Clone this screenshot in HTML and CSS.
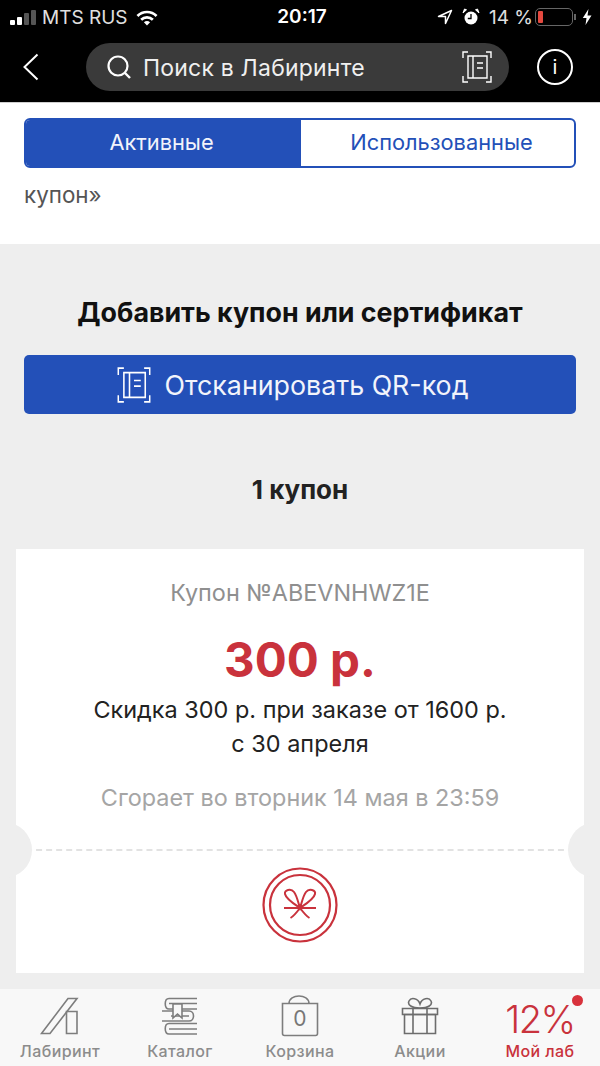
FILE: index.html
```html
<!DOCTYPE html>
<html lang="ru">
<head>
    <meta charset="UTF-8">
    <meta name="viewport" content="width=device-width, initial-scale=1.0">
    <title>Купоны</title>
    <link rel="stylesheet" href="styles.css">
</head>
<body>
    <div class="screen">
        <div class="status-bar">
            <div class="status-left">
                <div class="signal"><i class="on"></i><i class="on"></i><i></i><i></i></div>
                <span>MTS RUS</span>
                <svg class="wifi" width="24" height="17" viewBox="0 0 24 17"><path d="M1.5 6A15 15 0 0 1 22.5 6L20.6 8A12 12 0 0 0 3.4 8Z" fill="#fff"/><path d="M5.2 9.7A10 10 0 0 1 18.800 9.700L16.900 11.700A7.200 7.200 0 0 0 7.100 11.700Z" fill="#fff"/><path d="M8.900 13.300A4.700 4.700 0 0 1 15.100 13.300L12 16.500Z" fill="#fff"/></svg>
            </div>
            <div class="status-time">20:17</div>
            <div class="status-right">
                <svg width="16" height="16" viewBox="0 0 16 16"><path d="M14.500 1.500 1.500 7.500H8.500V14.500Z" fill="none" stroke="#fff" stroke-width="1.500" stroke-linejoin="round"/></svg>
                <svg class="alarm" width="18" height="18" viewBox="0 0 18 18"><circle cx="9" cy="10" r="6.500" fill="#fff"/><path d="M9 6V10.500H5.800" fill="none" stroke="#000" stroke-width="1.300"/><path d="M1 5 4.500 1.800 2.500 1ZM17 5 13.500 1.800 15.500 1Z" fill="#fff" stroke="#fff"/></svg>
                <span>14 %</span>
                <div class="battery"><div class="battery-level"></div></div>
                <div class="battery-tip"></div>
                <svg width="10" height="16" viewBox="0 0 10 16"><path d="M6.500 0 0.800 9H4.500L3.500 16 9.500 6.500H5.500Z" fill="#fff"/></svg>
            </div>
        </div>

        <div class="nav-bar">
            <svg class="back" width="18" height="28" viewBox="0 0 18 28"><path d="M15.500 1.500 2.500 14 15.500 26.500" fill="none" stroke="#fff" stroke-width="2"/></svg>
            <div class="search">
                <svg width="26" height="26" viewBox="0 0 26 26"><circle cx="12" cy="12" r="9.500" fill="none" stroke="#fff" stroke-width="2.200"/><path d="M18.500 18.500 24 24" stroke="#fff" stroke-width="2.400"/></svg>
                <span class="search-text">Поиск в Лабиринте</span>
                <svg class="scan" width="30" height="32" viewBox="0 0 30 32"><use href="#scan-icon"/></svg>
            </div>
            <div class="info"><span>i</span></div>
        </div>

        <div class="top-panel">
            <div class="tabs">
                <div class="tab active">Активные</div>
                <div class="tab">Использованные</div>
            </div>
            <div class="note">купон»</div>
        </div>

        <div class="content">
            <h2 class="add-title">Добавить купон или сертификат</h2>
            <div class="scan-btn">
                <svg width="34" height="36" viewBox="0 0 30 32"><use href="#scan-icon"/></svg>
                <span>Отсканировать QR-код</span>
            </div>
            <h3 class="count">1 купон</h3>

            <div class="coupon">
                <div class="coupon-top">
                    <div class="coupon-num">Купон №ABEVNHWZ1E</div>
                    <div class="coupon-sum">300 р.</div>
                    <div class="coupon-desc">Скидка 300 р. при заказе от 1600 р.<br>с 30 апреля</div>
                    <div class="coupon-exp">Сгорает во вторник 14 мая в 23:59</div>
                </div>
                <div class="coupon-bottom">
                    <svg width="76" height="76" viewBox="0 0 76 76" fill="none" stroke="#c9323c">
                        <circle cx="38" cy="38" r="36.500" stroke-width="2.200"/>
                        <circle cx="38" cy="38" r="30" stroke-width="2.200"/>
                        <path d="M22 41H54" stroke-width="2"/>
                        <path d="M38 41C32 37 24 32 23 27C22 23 29 21 32 25C35 29 36 35 38 41C40 35 41 29 44 25C47 21 54 23 53 27C52 32 44 37 38 41Z" stroke-width="2"/>
                        <path d="M38 41C35 45 32 49 28.500 51M38 41C41 45 44 49 47.500 51" stroke-width="2"/>
                    </svg>
                </div>
                <div class="notch notch-left"></div>
                <div class="notch notch-right"></div>
            </div>
        </div>

        <div class="tab-bar">
            <div class="tab-item">
                <svg width="40" height="38" viewBox="0 0 40 38" fill="none" stroke="#7d7d7d" stroke-width="1.600"><path d="M1.500 36.500 28 1.500H37L10 36.500Z"/><path d="M26.500 14.500H37V36.500H26.500Z"/></svg>
                <span>Лабиринт</span>
            </div>
            <div class="tab-item">
                <svg width="38" height="38" viewBox="0 0 38 38" fill="none" stroke="#7d7d7d" stroke-width="1.600"><path d="M36 1.500H8C3 1.500 3 12 8 12H36M8 6.500H36"/><path d="M1 14H28C34 14 34 24 28 24H1M28 19H10"/><path d="M36 26.500H8C3 26.500 3 37 8 37H36M8 32H36"/><path d="M12 7H21V21L16.500 17 12 21Z" fill="#f8f8f8"/></svg>
                <span>Каталог</span>
            </div>
            <div class="tab-item tab-item-bag">
                <div class="bag">
                    <svg width="38" height="42" viewBox="0 0 38 42" fill="none" stroke="#7d7d7d" stroke-width="1.600"><path d="M1.500 8.500H36.500V38.500Q36.500 40.500 34.500 40.500H3.500Q1.500 40.500 1.500 38.500Z"/><path d="M8 8.500C8 -1.500 28 -1.500 28 8.500"/></svg>
                    <b>0</b>
                </div>
                <span>Корзина</span>
            </div>
            <div class="tab-item">
                <svg width="38" height="38" viewBox="0 0 38 38" fill="none" stroke="#6d6d6d" stroke-width="1.600"><path d="M1.500 11.500H36.500V17.500H1.500Z"/><path d="M3.500 17.500V36.500H34.500V17.500Z"/><path d="M12 11.500V36.500M26 11.500V36.500"/><path d="M19 11C11 11 6 8 8 4C10 0 17 1 19 7C21 1 28 0 30 4C32 8 27 11 19 11Z"/></svg>
                <span>Акции</span>
            </div>
            <div class="tab-item tab-item-active">
                <div class="percent">12%</div>
                <span>Мой лаб</span>
                <div class="dot"></div>
            </div>
        </div>
    </div>

    <svg class="defs" width="0" height="0">
        <symbol id="scan-icon" viewBox="0 0 30 32">
            <g fill="none" stroke="#fff">
                <path d="M1 7V1H6M24 1H29V7M1 25V31H6M24 31H29V25" stroke-width="1.400"/>
                <path d="M6 5H25V27H6ZM11 5V27M15 12H21M15 17H21" stroke-width="1.400"/>
            </g>
        </symbol>
    </svg>
</body>
</html>
```

FILE: styles.css
```css
* {
    margin: 0;
    padding: 0;
    box-sizing: border-box;
}

html, body {
    font-family: "Inter", "Noto Sans", sans-serif;
    height: 100%;
    overflow: hidden;
    background: #eeeeee;
}

.screen {
    width: 600px;
    height: 1066px;
    display: flex;
    flex-direction: column;
}

.defs {
    position: absolute;
}

/* status bar */
.status-bar {
    height: 43px;
    background: #000;
    color: #fff;
    display: flex;
    align-items: center;
    justify-content: space-between;
    padding: 0 8px 9px 10px;
    position: relative;
}

.status-left, .status-right {
    display: flex;
    align-items: center;
}

.status-left span {
    margin-left: 6px;
    color: #e0e0e0;
    font-size: 19px;
}

.wifi {
    margin-left: 7px;
}

.signal {
    display: flex;
    align-items: flex-end;
    gap: 2px;
    height: 15px;
}

.signal i {
    width: 5px;
    background: #555;
    border-radius: 1px;
}

.signal i:nth-child(1) { height: 5px; }
.signal i:nth-child(2) { height: 8px; }
.signal i:nth-child(3) { height: 12px; }
.signal i:nth-child(4) { height: 15px; }
.signal i.on { background: #fff; }

.status-time {
    position: absolute;
    left: 4px;
    right: 0;
    top: 5px;
    text-align: center;
    font-weight: 600;
    font-size: 19px;
    pointer-events: none;
}

.status-right span {
    margin-left: 9px;
    font-size: 19px;
    color: #e0e0e0;
}

.alarm {
    margin-left: 9px;
}

.battery {
    width: 38px;
    height: 18px;
    margin-left: 2px;
    border: 1.500px solid #666;
    border-radius: 5px;
    padding: 2px;
}

.battery-level {
    width: 5px;
    height: 100%;
    background: #e5493f;
    border-radius: 1px;
}

.battery-tip {
    width: 2px;
    height: 6px;
    margin: 0 6px 0 1px;
    background: #666;
}

/* nav */
.nav-bar {
    height: 59px;
    background: #000;
    display: flex;
    align-items: flex-start;
    padding: 0 27px 0 22px;
}

.back {
    margin-top: 10px;
}

.search {
    width: 423px;
    height: 48px;
    margin-left: 46px;
    background: #3a3a3a;
    border-radius: 24px;
    display: flex;
    align-items: center;
    padding: 0 17px 0 20px;
    color: #efefef;
    font-size: 23px;
}

.search-text {
    flex: 1;
    margin-top: 2px;
    margin-left: 11px;
    letter-spacing: 0.2px;
}

.info {
    width: 36px;
    height: 36px;
    margin-left: 28px;
    margin-top: 6px;
    border: 2px solid #fff;
    border-radius: 50%;
    color: #fff;
    font-size: 20px;
    display: flex;
    align-items: center;
    justify-content: center;
}

/* white block */
.top-panel {
    height: 142px;
    padding: 15px 24px 0;
    background: #fff;
    border-top: 1px solid #cfcfcf;
}

.tabs {
    display: flex;
    height: 50px;
    border: 2px solid #2350b8;
    border-radius: 6px;
    overflow: hidden;
}

.tab {
    flex: 1;
    display: flex;
    align-items: center;
    justify-content: center;
    padding: 0 0 2px 8px;
    font-size: 21.8px;
    color: #2350b8;
}

.tab.active {
    flex: 0 0 275px;
    padding: 0 4px 2px 0;
    background: #2350b8;
    color: #f2f4fb;
}

.note {
    margin-top: 13px;
    font-size: 22.4px;
    color: #555;
}

/* main content */
.content {
    flex: 1;
    padding: 0 16px;
    background: #eeeeee;
}

.add-title {
    margin-top: 53px;
    text-align: center;
    font-size: 26.8px;
    line-height: 30px;
    font-weight: 700;
    color: #111;
}

.scan-btn {
    height: 59px;
    margin: 28px 8px 0;
    padding-right: 14px;
    background: #2350b8;
    border-radius: 5px;
    display: flex;
    align-items: center;
    justify-content: center;
    gap: 13px;
    color: #f2f4fb;
    font-size: 26.8px;
}

.count {
    margin-top: 60px;
    text-align: center;
    font-size: 26px;
    line-height: 32px;
    font-weight: 700;
    color: #222;
}

.coupon {
    position: relative;
    height: 424px;
    margin-top: 43px;
    background: #fff;
    text-align: center;
}

.coupon-top {
    height: 302px;
    border-bottom: 2px dashed #e2e2e2;
    padding-top: 30px;
}

.coupon-num {
    font-size: 23.4px;
    line-height: 28px;
    color: #8f8f8f;
}

.coupon-sum {
    margin-top: 22px;
    font-size: 47.5px;
    line-height: 62px;
    font-weight: 700;
    color: #c9323c;
}

.coupon-desc {
    margin-top: 2px;
    font-size: 23.45px;
    line-height: 34px;
    color: #222;
}

.coupon-exp {
    margin-top: 23px;
    font-size: 23.4px;
    line-height: 28px;
    color: #a5a5a5;
}

.coupon-bottom {
    display: flex;
    justify-content: center;
    padding-top: 16px;
}

.notch {
    position: absolute;
    top: 273px;
    width: 56px;
    height: 56px;
    background: #eeeeee;
    border-radius: 50%;
}

.notch-left {
    left: -40px;
}

.notch-right {
    right: -40px;
}

/* bottom tabs */
.tab-bar {
    height: 77px;
    background: #f8f8f8;
    display: flex;
}

.tab-item {
    position: relative;
    flex: 1;
    display: flex;
    flex-direction: column;
    align-items: center;
    justify-content: flex-end;
    padding-bottom: 5px;
    gap: 6px;
    font-size: 16px;
    font-weight: 500;
    letter-spacing: 0.4px;
    color: #8c8c8c;
}

.tab-item-bag {
    gap: 4px;
}

.bag {
    position: relative;
    height: 42px;
}

.bag b {
    position: absolute;
    left: 0;
    right: 0;
    top: 11px;
    text-align: center;
    font-weight: 400;
    font-size: 21px;
    color: #777;
}

.tab-item-active {
    color: #c9323c;
    gap: 0;
}

.percent {
    font-size: 38px;
    line-height: 44px;
    font-weight: 300;
    letter-spacing: -1.500px;
}

.dot {
    position: absolute;
    top: 6px;
    left: 92px;
    width: 11px;
    height: 11px;
    border-radius: 50%;
    background: #d8323c;
}
```
